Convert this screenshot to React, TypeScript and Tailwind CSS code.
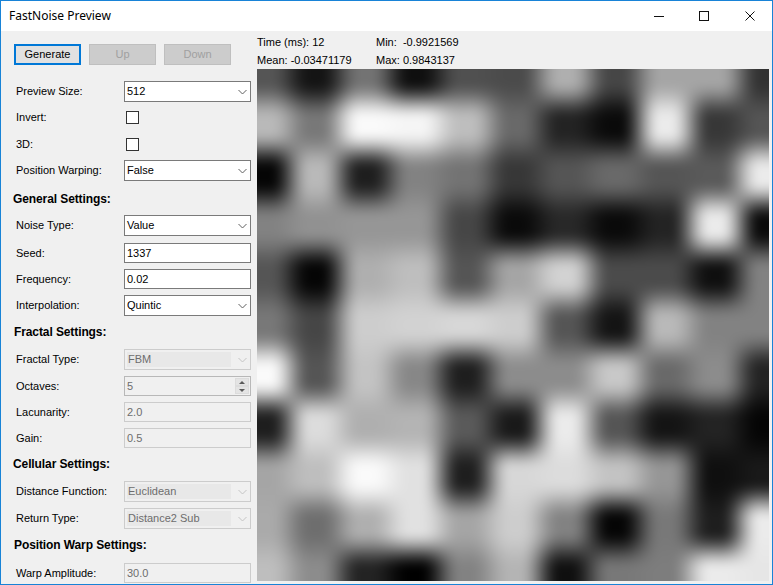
import { useEffect, useRef } from "react";

// gray value at each lattice point, 50px apart
const lattice = [
  [85, 20, 115, 15, 80, 75, 175, 70, 165, 165, 50],
  [185, 120, 250, 245, 190, 105, 35, 10, 235, 55, 85],
  [5, 185, 30, 130, 115, 55, 85, 105, 85, 90, 235],
  [130, 145, 150, 150, 70, 10, 40, 10, 35, 235, 10],
  [85, 5, 175, 190, 85, 165, 210, 75, 75, 15, 130],
  [120, 70, 205, 210, 215, 205, 85, 20, 185, 130, 130],
  [250, 85, 195, 135, 30, 140, 140, 200, 105, 140, 35],
  [30, 220, 175, 180, 90, 25, 235, 85, 20, 35, 5],
  [165, 190, 250, 225, 30, 215, 220, 195, 150, 15, 25],
  [170, 110, 175, 225, 165, 205, 130, 5, 120, 30, 235],
  [190, 140, 35, 0, 130, 180, 15, 120, 125, 235, 230],
];

const quintic = (t: number) => t * t * t * (t * (t * 6 - 15) + 10);

function NoisePreview() {
  const ref = useRef<HTMLCanvasElement>(null);

  useEffect(() => {
    const ctx = ref.current?.getContext("2d");
    if (!ctx) return;
    const img = ctx.createImageData(512, 512);
    const at = (r: number, c: number) =>
      lattice[Math.max(0, Math.min(10, r))][Math.max(0, Math.min(10, c))];
    for (let y = 0; y < 512; y++) {
      for (let x = 0; x < 512; x++) {
        const gx = (x - 8) / 50;
        const gy = (y - 6) / 50;
        const c = Math.floor(gx);
        const r = Math.floor(gy);
        const tx = quintic(gx - c);
        const ty = quintic(gy - r);
        const top = at(r, c) + (at(r, c + 1) - at(r, c)) * tx;
        const bottom = at(r + 1, c) + (at(r + 1, c + 1) - at(r + 1, c)) * tx;
        const v = top + (bottom - top) * ty;
        const i = (y * 512 + x) * 4;
        img.data[i] = v;
        img.data[i + 1] = v;
        img.data[i + 2] = v;
        img.data[i + 3] = 255;
      }
    }
    ctx.putImageData(img, 0, 0);
  }, []);

  return <canvas ref={ref} width={512} height={512} className="block w-[512px] h-[512px]" />;
}

function Chevron({ disabled }: { disabled?: boolean }) {
  return (
    <svg width="9" height="5" viewBox="0 0 9 5" className="absolute right-[3px] top-1/2 -translate-y-1/2" fill="none">
      <path d="M0.5 0.5 L4.5 4.5 L8.5 0.5" stroke={disabled ? "#c4c4c4" : "#606060"} strokeWidth="1" />
    </svg>
  );
}

function Row({ label, className, children }: { label: string; className: string; children: React.ReactNode }) {
  return (
    <div className={`flex items-center ${className}`}>
      <span className="w-[123px] pl-[15px] shrink-0 whitespace-nowrap">{label}</span>
      {children}
    </div>
  );
}

function Select({ value, disabled }: { value: string; disabled?: boolean }) {
  if (disabled) {
    return (
      <div className="relative w-[127px] h-[21px] border border-[#cccccc] bg-[#f0f0f0] text-[#6d6d6d] p-[2px] flex">
        <div className="w-[104px] bg-[#e8e8e8] pl-[1px] flex items-center">{value}</div>
        <Chevron disabled />
      </div>
    );
  }
  return (
    <div className="relative w-[127px] h-[21px] border border-[#7a7a7a] bg-white pl-[2px] flex items-center">
      {value}
      <Chevron />
    </div>
  );
}

function Input({ value, disabled }: { value: string; disabled?: boolean }) {
  return (
    <div
      className={
        disabled
          ? "w-[127px] h-[20px] border border-[#cccccc] bg-[#f0f0f0] text-[#6d6d6d] pl-[2px] flex items-center"
          : "w-[127px] h-[20px] border border-[#7a7a7a] bg-white pl-[2px] flex items-center"
      }
    >
      {value}
    </div>
  );
}

function Check() {
  return <div className="ml-[2px] w-[13px] h-[13px] border border-[#333333] bg-white" />;
}

function Heading({ text, className }: { text: string; className: string }) {
  return (
    <div className={`h-[14px] leading-[14px] text-[12px] tracking-[-0.1px] font-bold text-black whitespace-nowrap ${className}`}>
      {text}
    </div>
  );
}

export default function App() {
  return (
    <div className="w-[773px] h-[585px] border border-[#1883d7] bg-[#f0f0f0] text-[11px] leading-none text-black font-['Liberation_Sans',sans-serif] overflow-hidden flex flex-col">
      <div className="h-[30px] shrink-0 bg-white flex items-center justify-between">
        <span className="pl-[8px] text-[12px] font-['Noto_Sans',sans-serif]">FastNoise Preview</span>
        <div className="flex items-center h-full pr-[17px]">
          <svg width="10" height="10" viewBox="0 0 10 10" fill="none">
            <path d="M0 5.5 H10" stroke="#111" />
          </svg>
          <svg width="10" height="10" viewBox="0 0 10 10" fill="none" className="ml-[35px]">
            <rect x="0.5" y="0.5" width="9" height="9" stroke="#111" />
          </svg>
          <svg width="10" height="10" viewBox="0 0 10 10" fill="none" className="ml-[36px]">
            <path d="M0.5 0.5 L9.5 9.5 M9.5 0.5 L0.5 9.5" stroke="#111" />
          </svg>
        </div>
      </div>

      <div className="flex flex-1 min-h-0">
        <aside className="w-[256px] shrink-0 flex flex-col">
          <div className="flex mt-[13px] ml-[13px] gap-[8px]">
            <button className="w-[67px] h-[21px] border-2 border-[#0078d7] bg-[#e1e1e1]">Generate</button>
            <button className="w-[67px] h-[21px] border border-[#bfbfbf] bg-[#cccccc] text-[#a0a0a0]">Up</button>
            <button className="w-[67px] h-[21px] border border-[#bfbfbf] bg-[#cccccc] text-[#a0a0a0]">Down</button>
          </div>

          <Row label="Preview Size:" className="mt-[16px]"><Select value="512" /></Row>
          <Row label="Invert:" className="mt-[9px]"><Check /></Row>
          <Row label="3D:" className="mt-[14px]"><Check /></Row>
          <Row label="Position Warping:" className="mt-[9px]"><Select value="False" /></Row>

          <Heading text="General Settings:" className="mt-[11px] ml-[12px]" />
          <Row label="Noise Type:" className="mt-[9px]"><Select value="Value" /></Row>
          <Row label="Seed:" className="mt-[7px]"><Input value="1337" /></Row>
          <Row label="Frequency:" className="mt-[6px]"><Input value="0.02" /></Row>
          <Row label="Interpolation:" className="mt-[6px]"><Select value="Quintic" /></Row>

          <Heading text="Fractal Settings:" className="mt-[9px] ml-[13px]" />
          <Row label="Fractal Type:" className="mt-[10px]"><Select value="FBM" disabled /></Row>
          <Row label="Octaves:" className="mt-[6px]">
            <div className="relative w-[127px] h-[20px] border border-[#b8b8b8] bg-[#f0f0f0] text-[#6d6d6d] pl-[2px] flex items-center">
              5
              <div className="absolute right-[1px] top-[1px] w-[14px] flex flex-col">
                <div className="h-[8px] bg-[#e4e4e4] border border-[#dcdcdc] flex items-center justify-center">
                  <div className="w-0 h-0 border-x-[3px] border-x-transparent border-b-[3px] border-b-[#5a5a5a]" />
                </div>
                <div className="h-[8px] bg-[#e4e4e4] border border-[#dcdcdc] flex items-center justify-center">
                  <div className="w-0 h-0 border-x-[3px] border-x-transparent border-t-[3px] border-t-[#5a5a5a]" />
                </div>
              </div>
            </div>
          </Row>
          <Row label="Lacunarity:" className="mt-[6px]"><Input value="2.0" disabled /></Row>
          <Row label="Gain:" className="mt-[6px]"><Input value="0.5" disabled /></Row>

          <Heading text="Cellular Settings:" className="mt-[9px] ml-[12px]" />
          <Row label="Distance Function:" className="mt-[10px]"><Select value="Euclidean" disabled /></Row>
          <Row label="Return Type:" className="mt-[6px]"><Select value="Distance2 Sub" disabled /></Row>

          <Heading text="Position Warp Settings:" className="mt-[9px] ml-[13px]" />
          <Row label="Warp Amplitude:" className="mt-[11px]"><Input value="30.0" disabled /></Row>
        </aside>

        <main className="flex flex-col">
          <div className="h-[38px] grid grid-cols-[119px_1fr] grid-rows-2 items-center pt-[2px] whitespace-nowrap">
            <span>Time (ms): 12</span>
            <span>Min:&nbsp; -0.9921569</span>
            <span>Mean: -0.03471179</span>
            <span>Max: 0.9843137</span>
          </div>
          <NoisePreview />
        </main>
      </div>
    </div>
  );
}
